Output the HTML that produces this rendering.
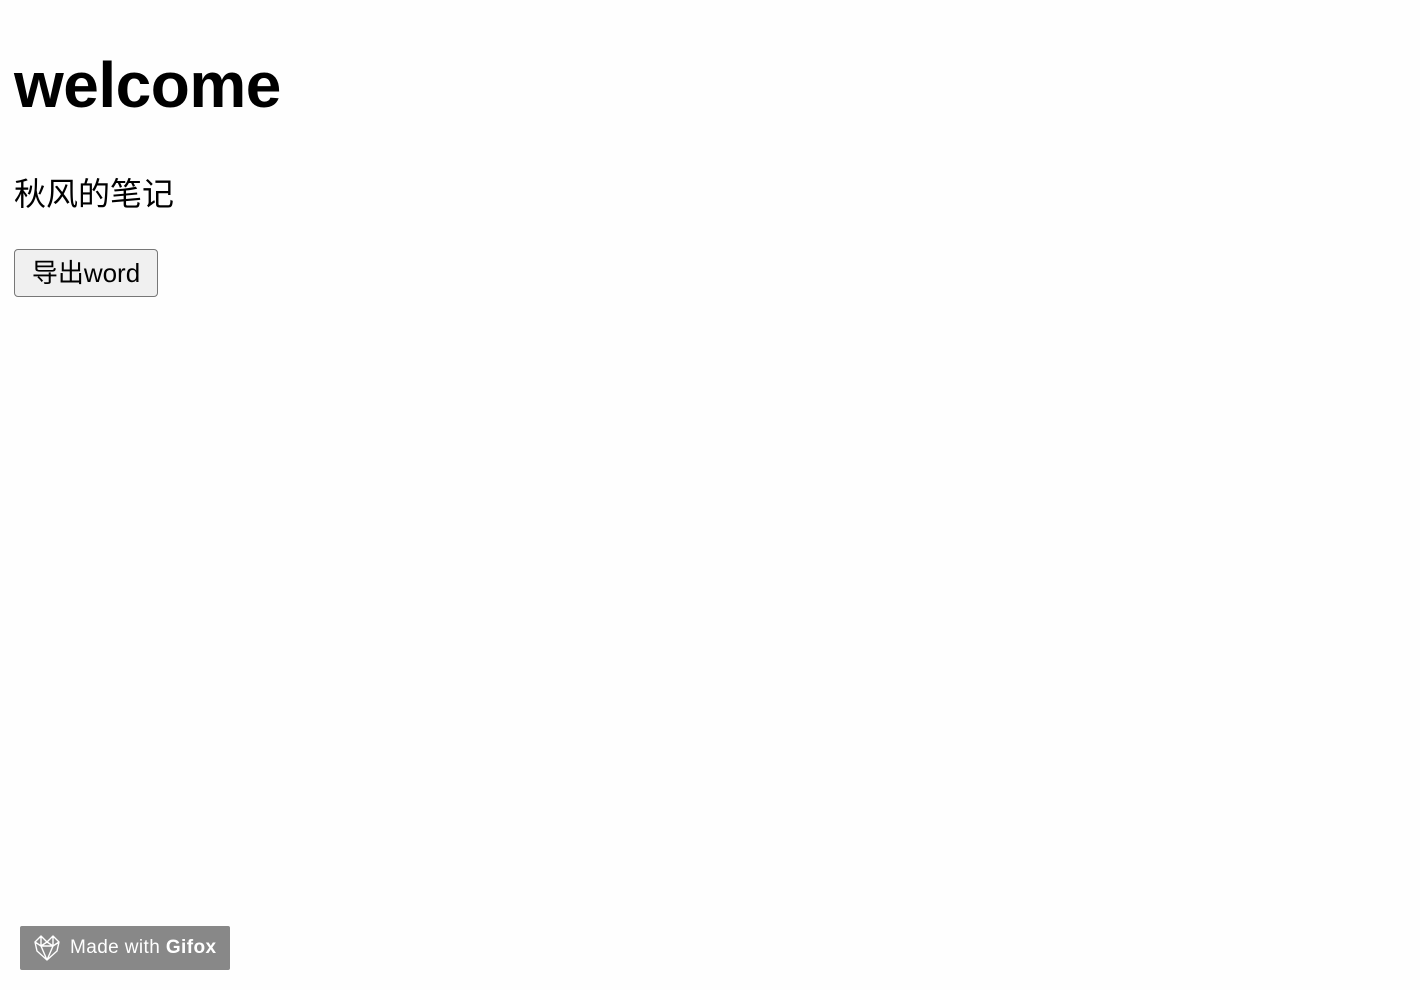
<!DOCTYPE html>
<html><head><meta charset="utf-8"><style>
html,body{margin:0;padding:0;width:1420px;height:990px;background:#fefefe;overflow:hidden;font-family:"Liberation Sans","Noto Sans CJK SC",sans-serif;color:#000}
h1{position:absolute;left:14px;top:47px;margin:0;font-size:64px;font-weight:bold;line-height:76px;letter-spacing:-0.5px}
.p{position:absolute;left:14px;top:174px;font-size:32px;line-height:40px;font-family:"Liberation Sans","Noto Sans CJK SC",sans-serif}
.btn{position:absolute;left:14px;top:249px;width:142px;height:46px;border:1.5px solid #777;border-radius:4px;background:#f0f0f0;font-size:26px;line-height:46px;text-align:center;font-family:"Liberation Sans","Noto Sans CJK SC",sans-serif}
.gif{position:absolute;left:20px;top:926px;width:210px;height:44px;background:#888;border-radius:2px;color:#fff;font-size:19px;line-height:44px;letter-spacing:0.4px}
.gif span{position:absolute;left:50px;top:0}
.gif svg{position:absolute;left:12px;top:8px}
</style></head><body>
<h1>welcome</h1>
<div class="p">秋风的笔记</div>
<div class="btn">导出word</div>
<div class="gif"><svg width="30" height="28" viewBox="0 0 30 28" fill="none" stroke="#fff" stroke-width="1.4" stroke-linejoin="round"><path d="M3 8 L9 2 L15 8 L21 2 L27 8 L25 17 L15 26 L5 17 Z M9 2 L9 12 L15 8 L21 12 L21 2 M3 8 L9 12 L15 26 L21 12 L27 8 M9 12 L21 12"/></svg><span>Made with <b>Gifox</b></span></div>
</body></html>
